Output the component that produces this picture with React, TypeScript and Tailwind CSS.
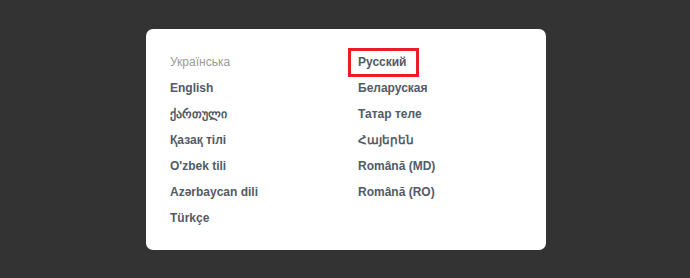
export default function App() {
  const left = [
    "English",
    "ქართული",
    "Қазақ тілі",
    "O'zbek tili",
    "Azərbaycan dili",
    "Türkçe",
  ]
  const right = [
    "Беларуская",
    "Татар теле",
    "Հայերեն",
    "Română (MD)",
    "Română (RO)",
  ]

  return (
    <div
      className="w-[690px] h-[278px] bg-[#333333] pt-[29px] pl-[146px]"
      style={{ fontFamily: '"Liberation Sans", Arial, sans-serif' }}
    >
      <div className="w-[400px] h-[221px] bg-white rounded-[7px] pt-[20px] pl-[24px] flex">
        <ul className="w-[188px] text-[12px] leading-[26px]">
          <li className="text-[#9a9a9a]">Українська</li>
          {left.map((l) => (
            <li key={l} className="font-bold text-[#525a66]">
              {l}
            </li>
          ))}
        </ul>
        <ul className="text-[12px] leading-[26px] font-bold text-[#525a66]">
          <li>
            <span className="relative inline-block">
              Русский
              <span className="absolute left-[-10px] right-[-12px] top-[-1px] bottom-[-2px] border-[3px] border-[#ed1c24]" />
            </span>
          </li>
          {right.map((r) => (
            <li key={r}>{r}</li>
          ))}
        </ul>
      </div>
    </div>
  )
}
